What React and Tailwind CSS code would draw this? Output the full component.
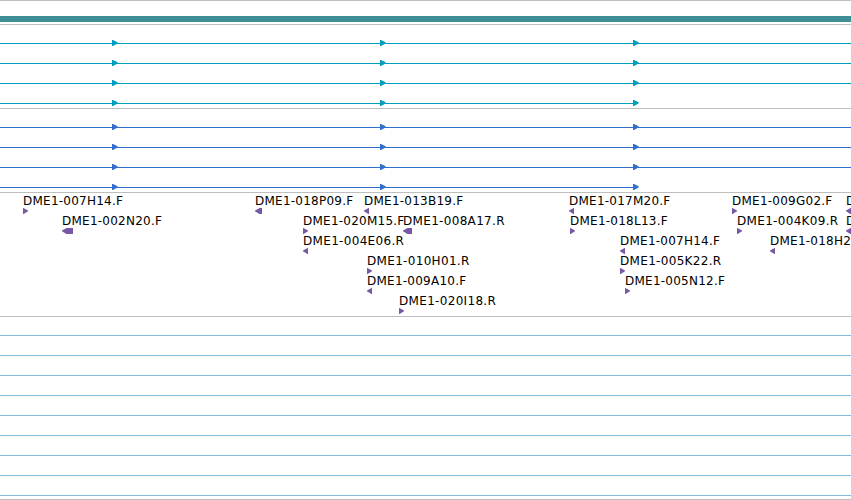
import React from 'react';

const alignments = [
  { arrows: [112, 380, 633], end: null },
  { arrows: [112, 380, 633], end: null },
  { arrows: [112, 380, 633], end: null },
  { arrows: [112, 380, 633], end: 638 },
];

const cloneLanes = [
  [
    { name: 'DME1-007H14.F', x: 23, w: 5, dir: 'fwd' },
    { name: 'DME1-018P09.F', x: 255, w: 7, dir: 'rev' },
    { name: 'DME1-013B19.F', x: 364, w: 5, dir: 'rev' },
    { name: 'DME1-017M20.F', x: 569, w: 5, dir: 'rev' },
    { name: 'DME1-009G02.F', x: 732, w: 5, dir: 'fwd' },
    { name: 'D', x: 846, w: 5, dir: 'rev' },
  ],
  [
    { name: 'DME1-002N20.F', x: 62, w: 11, dir: 'rev' },
    { name: 'DME1-020M15.F', x: 303, w: 5, dir: 'fwd' },
    { name: 'DME1-008A17.R', x: 403, w: 9, dir: 'rev' },
    { name: 'DME1-018L13.F', x: 570, w: 5, dir: 'fwd' },
    { name: 'DME1-004K09.R', x: 737, w: 5, dir: 'fwd' },
    { name: 'D', x: 846, w: 5, dir: 'rev' },
  ],
  [
    { name: 'DME1-004E06.R', x: 303, w: 5, dir: 'rev' },
    { name: 'DME1-007H14.F', x: 620, w: 5, dir: 'rev' },
    { name: 'DME1-018H2', x: 770, w: 5, dir: 'rev' },
  ],
  [
    { name: 'DME1-010H01.R', x: 367, w: 5, dir: 'fwd' },
    { name: 'DME1-005K22.R', x: 620, w: 5, dir: 'fwd' },
  ],
  [
    { name: 'DME1-009A10.F', x: 367, w: 5, dir: 'rev' },
    { name: 'DME1-005N12.F', x: 625, w: 5, dir: 'fwd' },
  ],
  [{ name: 'DME1-020I18.R', x: 399, w: 5, dir: 'fwd' }],
];

const ArrowHead = ({ x }) => (
  <svg className="absolute top-[13px]" style={{ left: x }} width="6" height="6" viewBox="0 0 6 6" fill="currentColor">
    <path d="M0 0H1L5.6 2.2V3.4L1 6H0Z" />
  </svg>
);

const AlignmentTrack = ({ className }) => (
  <section className={`h-[84px] shrink-0 border-t border-[#bebebe] pt-[2px] ${className}`}>
    {alignments.map((row, i) => (
      <div key={i} className="relative h-5">
        <div className="pt-4">
          <div className="h-px bg-current" style={{ width: row.end ?? '100%' }} />
        </div>
        {row.arrows.map((x) => (
          <ArrowHead key={x} x={x} />
        ))}
      </div>
    ))}
  </section>
);

// Body is a block that tapers over its last 5px in the read direction
const Clone = ({ name, x, w, dir }) => (
  <div className="absolute top-0" style={{ left: x }}>
    <div
      className={`h-[15px] pt-px text-[12px] leading-[15px] whitespace-nowrap text-black ${
        name.endsWith('.R') ? 'tracking-[0.32px]' : 'tracking-[0.24px]'
      }`}
    >
      {name}
    </div>
    <svg className="block text-[#7658a5]" width={w} height="6" viewBox={`0 0 ${w} 6`} fill="currentColor">
      {dir === 'fwd' ? (
        <path d={`M0 0H${w - 4.6}L${w} 2.4V3.3L${w - 4.4} 6H0Z`} />
      ) : (
        <path d={`M${w} 0H4.6L0 2.4V3.3L4.4 6H${w}Z`} />
      )}
    </svg>
  </div>
);

const App = () => (
  <main className="flex h-[500px] w-[851px] flex-col overflow-hidden bg-white font-['DejaVu_Sans',sans-serif]">
    {/* Reference contig */}
    <section className="h-6 shrink-0 border-t border-[#bebebe] pt-[15px]">
      <div className="h-1.5 bg-[#3e8e94]" />
    </section>

    <AlignmentTrack className="text-[#009ebe]" />
    <AlignmentTrack className="text-[#316fce]" />

    {/* Clone ends */}
    <section className="h-[124px] shrink-0 border-t border-[#bebebe]">
      {cloneLanes.map((lane, i) => (
        <div key={i} className="relative h-5">
          {lane.map((clone) => (
            <Clone key={clone.x} {...clone} />
          ))}
        </div>
      ))}
    </section>

    {/* Empty rows */}
    <section className="h-[183px] shrink-0 border-t border-[#bebebe] pt-[18px]">
      {Array.from({ length: 9 }, (_, i) => (
        <div key={i} className="h-5 border-t border-[#87b9da] last:h-px" />
      ))}
    </section>
    <div className="h-px shrink-0 bg-[#bebebe]" />
  </main>
);

export default App;
